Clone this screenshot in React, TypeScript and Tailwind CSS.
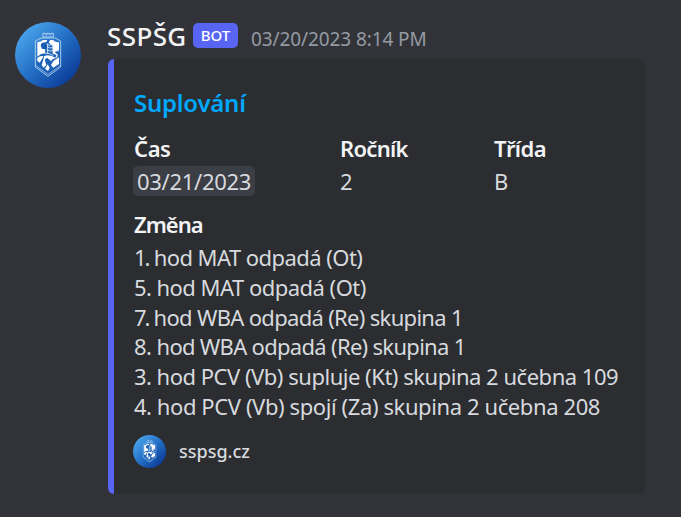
function Crest({ className, id }: { className: string; id: string }) {
  return (
    <svg className={className} viewBox="0 0 198 198" aria-hidden="true">
      <defs>
        <linearGradient id={id} x1="0.12" y1="0.12" x2="0.88" y2="0.88">
          <stop offset="0" stopColor="#4ba3ea" />
          <stop offset="0.5" stopColor="#236fc5" />
          <stop offset="1" stopColor="#0b3a96" />
        </linearGradient>
      </defs>
      <circle cx="99" cy="99" r="99" fill={`url(#${id})`} />
      <g fill="none" stroke="#c3dcf5" strokeWidth="2.5">
        <path d="M84 45V34h8v4h4v-4h8v4h4v-4h7v11Z" />
        <path d="M61 57L78 48H121L137 57V135L99 163L61 135Z" />
        <path d="M61 130L99 157L137 130" strokeWidth="2" />
      </g>
      <path d="M67 61Q80 60 84 53H116Q120 60 132 61V128L99 151L67 128Z" fill="#1c62b7" />
      <path d="M67 61Q79 60 84 54H97L94 60L80 63L77 70L80 80L90 82L91 94L78 96L67 104Z" fill="#fff" />
      <path d="M105 54H114Q120 61 132 61V84Q121 80 117 91L119 98L113 94L112 70L101 62Z" fill="#fff" />
      <path d="M80 66H95V81L85 78Z" fill="#155bae" />
      <path d="M95 66Q103 72 111 68M96 74Q104 80 112 77M95 83Q104 89 113 86M91 94Q104 92 115 101M98 65V93" fill="none" stroke="#e8f3ff" strokeWidth="2.5" />
      <path d="M67 108Q76 100 86 103L74 122L67 117Z" fill="#fff" />
      <path d="M88 102Q103 96 123 108Q112 109 108 117L96 107L89 113L94 129L86 137L80 130Z" fill="#fff" />
      <path d="M98 127L104 137L99 147L90 140ZM116 116L132 106V126L115 137L108 129Z" fill="#fff" />
      <path d="M131 87Q118 82 119 94Q132 99 122 107" fill="none" stroke="#fff" strokeWidth="4" />
    </svg>
  );
}

const changes = [
  { hour: "1.", text: " hod MAT odpadá (Ot)", lead: "tracking-[-2px]", tracking: "tracking-[-0.55px]" },
  { hour: "5.", text: " hod MAT odpadá (Ot)", lead: "tracking-[-0.6px]", tracking: "tracking-[-0.52px]" },
  { hour: "7.", text: " hod WBA odpadá (Re) skupina 1", lead: "tracking-[-2px]", tracking: "tracking-[-0.69px]" },
  { hour: "8.", text: " hod WBA odpadá (Re) skupina 1", lead: "tracking-[-0.5px]", tracking: "tracking-[-0.7px]" },
  { hour: "3.", text: " hod PCV (Vb) supluje (Kt) skupina 2 učebna 109", lead: "tracking-[-0.6px]", tracking: "tracking-[-0.48px]" },
  { hour: "4.", text: " hod PCV (Vb) spojí (Za) skupina 2 učebna 208", lead: "tracking-[-0.5px]", tracking: "tracking-[-0.4px]" },
];

export default function App() {
  return (
    <main className="flex h-[517px] w-[681px] overflow-hidden whitespace-nowrap bg-[#323338] pl-[15px] font-['Noto_Sans',sans-serif] text-[#d7dade]">
      <Crest className="mt-[22px] size-[66px] shrink-0" id="avatar-blue" />
      <div className="ml-[27px] w-[537px]">
        <header className="flex h-[59px] items-start">
          <span className="-ml-px mt-5 w-[86px] text-[26px] font-medium leading-[32px] tracking-[0.4px] text-[#f2f3f5]">SSPŠG</span>
          <span className="mt-[23px] flex h-[25px] w-[45px] items-center justify-center rounded-[5px] bg-[#5865f2] text-[15px] font-medium text-white">BOT</span>
          <span className="ml-[13px] mt-[23px] text-[19px] leading-[32px] tracking-[-0.1px] text-[#949ba4]">03/20/2023 8:14 PM</span>
        </header>
        <article className="h-[435px] rounded-[6px] border-l-[6px] border-[#5865f2] bg-[#2b2d31] pl-[19px] pt-[29px]">
          <h1 className="pl-px text-[24px] font-semibold leading-[30px] tracking-[-0.25px] text-[#00a8fc]">Suplování</h1>
          <dl className="mt-3.5 grid grid-cols-[207px_154px_1fr] text-[22px]">
            <div>
              <dt className="h-[34px] pl-px font-semibold leading-[32px] tracking-[-0.4px] text-[#f2f3f5]">Čas</dt>
              <dd className="flex h-[30px] w-[122px] items-center rounded-[5px] bg-[#3b3e45] pl-1 leading-[30px] tracking-[-0.3px]">03/21/2023</dd>
            </div>
            <div>
              <dt className="h-[33px] font-semibold leading-[32px] tracking-[-0.7px] text-[#f2f3f5]">Ročník</dt>
              <dd className="leading-[32px]">2</dd>
            </div>
            <div>
              <dt className="h-[33px] font-semibold leading-[32px] tracking-[-0.6px] text-[#f2f3f5]">Třída</dt>
              <dd className="leading-[32px]">B</dd>
            </div>
          </dl>
          <section className="mt-[11px] pl-px text-[22px]">
            <h2 className="h-[35px] font-semibold leading-[32px] tracking-[-1px] text-[#f2f3f5]">Změna</h2>
            {changes.map(({ hour, text, lead, tracking }) => (
              <p key={hour} className={`leading-[29.8px] ${tracking}`}>
                <span className={lead}>{hour}</span>
                {text}
              </p>
            ))}
          </section>
          <footer className="mt-[13px] flex items-center gap-[13px] text-[18px] font-medium leading-[33px]">
            <Crest className="size-[33px]" id="footer-blue" />
            <span>sspsg.cz</span>
          </footer>
        </article>
      </div>
    </main>
  );
}
